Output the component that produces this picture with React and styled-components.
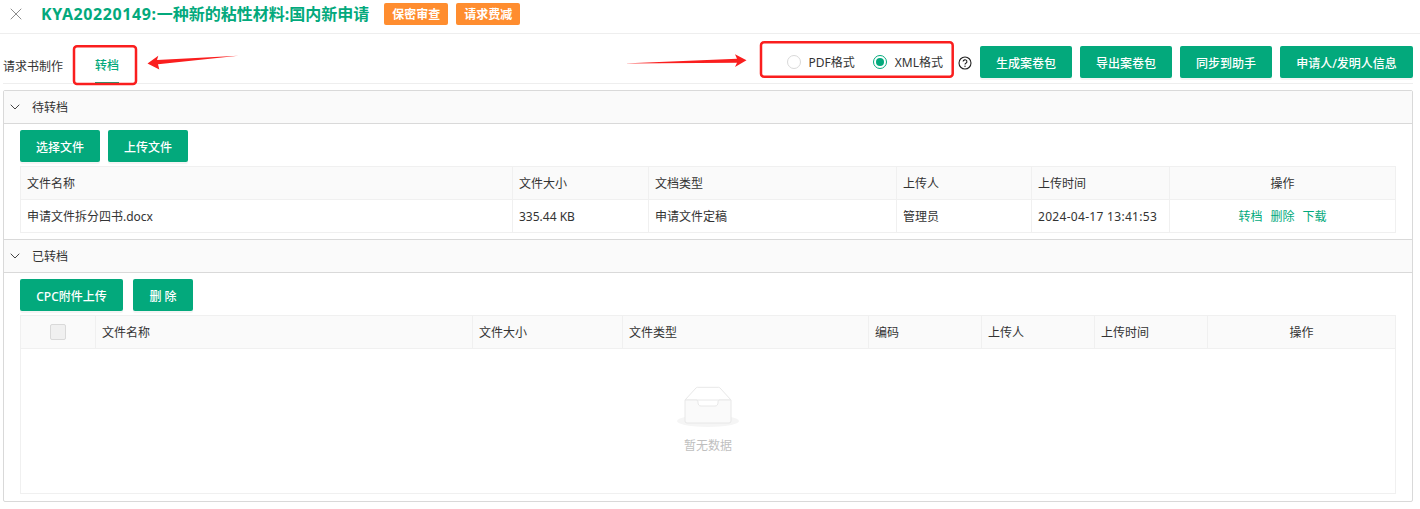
import React from "react";
import styled, { createGlobalStyle } from "styled-components";
import { X, ChevronDown } from "lucide-react";

const GREEN = "#03a97c";
const FONT = `"Noto Sans", "Noto Sans CJK SC", sans-serif`;

const Global = createGlobalStyle`
  html, body { margin: 0; padding: 0; background: #fff; overflow: hidden; }
  body { font-family: ${FONT}; font-size: 12px; color: #333; }
  * { box-sizing: border-box; }
`;

const Page = styled.div`
  position: relative;
  width: 1420px;
  height: 509px;
  overflow: hidden;
`;
const Header = styled.header`
  height: 34px;
  display: flex;
  align-items: center;
  padding: 0 0 5px 6px;
  border-bottom: 1px solid #eee;
`;
const Close = styled(X)`
  width: 20px;
  height: 20px;
  color: #8c8c8c;
  stroke-width: 1.2;
  margin-right: 15px;
`;
const Title = styled.h1`
  margin: 0 15px 0 0;
  font-size: 16px;
  line-height: 22px;
  font-weight: 700;
  color: ${GREEN};
  white-space: nowrap;
`;
const TitleCode = styled.span`
  letter-spacing: 0.6px;
`;
const Tag = styled.span`
  width: 64px;
  height: 22px;
  margin-right: 8px;
  display: flex;
  align-items: center;
  justify-content: center;
  background: #ff8d2f;
  color: #fff;
  font-weight: 700;
  font-size: 12px;
  border-radius: 2px;
`;
const TabBar = styled.div`
  height: 50px;
  margin: 0 7px 0 3px;
  display: flex;
  align-items: flex-end;
  border-bottom: 1px solid #eee;
`;
const TabLabel = styled.span`
  width: 92px;
  height: 32px;
  font-size: 12px;
  line-height: 32px;
  flex: none;
`;
const Tab = styled.span`
  width: 24px;
  height: 36px;
  padding-top: 8px;
  line-height: 20px;
  color: ${GREEN};
  font-weight: 500;
  border-bottom: 2px solid ${GREEN};
  margin-bottom: -1px;
  white-space: nowrap;
`;
const Tools = styled.div`
  margin-left: auto;
  height: 100%;
  padding: 12px 0 0;
  display: flex;
  align-items: flex-start;
  gap: 8px;
`;
const RadioGroup = styled.div`
  height: 32px;
  display: flex;
  align-items: center;
`;
const RadioItem = styled.label`
  display: flex;
  align-items: center;
  gap: 8px;
  margin-right: ${(p) => p.$gap}px;
  white-space: nowrap;
`;
const RadioDot = styled.span`
  width: 14px;
  height: 14px;
  border-radius: 50%;
  border: 1px solid ${(p) => (p.$on ? GREEN : "#d9d9d9")};
  display: flex;
  align-items: center;
  justify-content: center;
  &::after {
    content: "";
    width: 8px;
    height: 8px;
    border-radius: 50%;
    background: ${(p) => (p.$on ? GREEN : "transparent")};
  }
`;
const Help = styled.svg`
  width: 14px;
  height: 14px;
  margin: 2px 0 0 15px;
  flex: none;
`;
const Button = styled.button`
  width: ${(p) => p.$w}px;
  height: 32px;
  border: 0;
  padding: 1px 0 0;
  flex: none;
  background: ${GREEN};
  color: #fff;
  font-family: ${FONT};
  font-size: 12px;
  font-weight: 500;
  border-radius: 2px;
  box-shadow: 0 2px 0 rgba(0, 0, 0, 0.045);
`;
const Panel = styled.section`
  margin: 6px 7px 0 3px;
  height: 412px;
  border: 1px solid #d9d9d9;
  border-radius: 2px;
`;
const PanelHead = styled.div`
  height: ${(p) => (p.$top ? 34 : 33)}px;
  display: flex;
  align-items: center;
  padding: 0 0 0 3px;
  gap: 9px;
  background: #fafafa;
  border-bottom: 1px solid #d9d9d9;
  border-top: ${(p) => (p.$top ? "1px solid #d9d9d9" : "0")};
`;
const Chevron = styled(ChevronDown)`
  width: 16px;
  height: 16px;
  color: #444;
  stroke-width: 1.5;
`;
const PanelBody = styled.div`
  padding: ${(p) => p.$pt}px 16px ${(p) => p.$pb}px 16px;
`;
const Actions = styled.div`
  display: flex;
  gap: ${(p) => p.$gap}px;
  margin-bottom: 4px;
`;
const Table = styled.table`
  width: 1376px;
  border-collapse: separate;
  border-spacing: 0;
  table-layout: fixed;
  border: 1px solid #f0f0f0;
  border-bottom: 0;
  font-size: 12px;
`;
const Th = styled.th`
  height: 33px;
  padding: 0 6px;
  background: #fafafa;
  font-weight: 400;
  text-align: ${(p) => (p.$center ? "center" : "left")};
  border-bottom: 1px solid #f0f0f0;
  border-right: 1px solid #f0f0f0;
  &:last-child { border-right: 0; }
`;
const Td = styled.td`
  height: 33px;
  padding: 0 6px;
  text-align: ${(p) => (p.$center ? "center" : "left")};
  border-bottom: 1px solid #f0f0f0;
  border-right: 1px solid #f0f0f0;
  &:last-child { border-right: 0; }
`;
const EmptyCell = styled(Td)`
  padding: 0;
`;
const Timestamp = styled.span`
  letter-spacing: 0.3px;
`;
const LinkText = styled.a`
  color: ${GREEN};
  margin: 0 4px;
`;
const CheckBox = styled.span`
  display: block;
  width: 16px;
  height: 16px;
  margin: 0 auto;
  background: #f0f0f0;
  border: 1px solid #d9d9d9;
  border-radius: 2px;
`;
const Empty = styled.div`
  height: 144px;
  padding-top: 36px;
  display: flex;
  flex-direction: column;
  align-items: center;
  color: #bfbfbf;
`;
const EmptyText = styled.span`
  margin-top: 9px;
  line-height: 20px;
`;
const Notes = styled.svg`
  position: absolute;
  left: 0;
  top: 0;
  width: 1420px;
  height: 509px;
  pointer-events: none;
`;

const head1 = [
  ["文件名称", 492],
  ["文件大小", 136],
  ["文档类型", 248],
  ["上传人", 135],
  ["上传时间", 138],
  ["操作", 225, true],
];
const head2 = [
  ["", 75, true],
  ["文件名称", 377],
  ["文件大小", 150],
  ["文件类型", 246],
  ["编码", 113],
  ["上传人", 113],
  ["上传时间", 113],
  ["操作", 187, true],
];

const HeadRow = ({ cols, check }) => (
  <>
    <colgroup>
      {cols.map(([, w], i) => (
        <col key={i} width={w} />
      ))}
    </colgroup>
    <thead>
      <tr>
        {cols.map(([t, , c], i) => (
          <Th key={i} $center={c}>
            {check && i === 0 ? <CheckBox /> : t}
          </Th>
        ))}
      </tr>
    </thead>
  </>
);

export default function App() {
  return (
    <Page>
      <Global />
      <Header>
        <Close />
        <Title>
          <TitleCode>KYA20220149:</TitleCode>一种新的粘性材料:国内新申请
        </Title>
        <Tag>保密审查</Tag>
        <Tag>请求费减</Tag>
      </Header>
      <TabBar>
        <TabLabel>请求书制作</TabLabel>
        <Tab>转档</Tab>
        <Tools>
          <RadioGroup>
            <RadioItem $gap={18}>
              <RadioDot />
              PDF格式
            </RadioItem>
            <RadioItem $gap={0}>
              <RadioDot $on />
              XML格式
            </RadioItem>
            <Help viewBox="0 0 14 14" fill="none" stroke="#222">
              <circle cx="7" cy="7" r="6" strokeWidth="1.1" />
              <path d="M5.1 5.6a1.9 1.8 0 1 1 2.8 1.6c-.6.4-.9.7-.9 1.4" strokeWidth="1.1" />
              <circle cx="7" cy="10.3" r=".7" fill="#222" stroke="none" />
            </Help>
          </RadioGroup>
          <Button $w={92}>生成案卷包</Button>
          <Button $w={92}>导出案卷包</Button>
          <Button $w={92}>同步到助手</Button>
          <Button $w={133}>申请人/发明人信息</Button>
        </Tools>
      </TabBar>
      <Panel>
        <PanelHead>
          <Chevron />
          待转档
        </PanelHead>
        <PanelBody $pt={6} $pb={6}>
          <Actions $gap={8}>
            <Button $w={80}>选择文件</Button>
            <Button $w={80}>上传文件</Button>
          </Actions>
          <Table>
            <HeadRow cols={head1} />
            <tbody>
              <tr>
                <Td>申请文件拆分四书.docx</Td>
                <Td>335.44 KB</Td>
                <Td>申请文件定稿</Td>
                <Td>管理员</Td>
                <Td>
                  <Timestamp>2024-04-17 13:41:53</Timestamp>
                </Td>
                <Td $center>
                  <LinkText>转档</LinkText>
                  <LinkText>删除</LinkText>
                  <LinkText>下载</LinkText>
                </Td>
              </tr>
            </tbody>
          </Table>
        </PanelBody>
        <PanelHead $top>
          <Chevron />
          已转档
        </PanelHead>
        <PanelBody $pt={6} $pb={0}>
          <Actions $gap={10}>
            <Button $w={103}>CPC附件上传</Button>
            <Button $w={60}>删 除</Button>
          </Actions>
          <Table>
            <HeadRow cols={head2} check />
            <tbody>
              <tr>
                <EmptyCell colSpan={8} $center>
                  <Empty>
                    <svg width="62" height="42" viewBox="0 0 62 42">
                      <ellipse cx="31" cy="36" rx="31" ry="6" fill="#f5f5f5" />
                      <path d="M8 15L19 3a2 2 0 0 1 1.500-.7h21a2 2 0 0 1 1.500.7L54 15z" fill="#fff" stroke="#e8e8e8" />
                      <path d="M8 15h11c1.500 0 2 .7 2 2.500 0 2 1 3.500 3 3.500h14c2 0 3-1.500 3-3.500 0-1.800.5-2.500 2-2.500h11v21a2 2 0 0 1-2 2H10a2 2 0 0 1-2-2z" fill="#fafafa" stroke="#e8e8e8" />
                    </svg>
                    <EmptyText>暂无数据</EmptyText>
                  </Empty>
                </EmptyCell>
              </tr>
            </tbody>
          </Table>
        </PanelBody>
      </Panel>
      <Notes viewBox="0 0 1420 509">
        <rect x="74" y="46.300" width="62" height="37.700" rx="3" fill="none" stroke="#fa1e1e" strokeWidth="2.500" />
        <rect x="761" y="42.300" width="191.700" height="34.500" rx="3" fill="none" stroke="#fa1e1e" strokeWidth="2.500" />
        <path d="M147.500 63.500L158.300 55.700L157 60L238.300 55.700L158 64.300L159.300 69.500z" fill="#fa1e1e" />
        <path d="M623.300 63.500L737 58.700L735 54.300L746.500 60.300L735 67L737 62.700z" fill="#fa1e1e" />
      </Notes>
    </Page>
  );
}
